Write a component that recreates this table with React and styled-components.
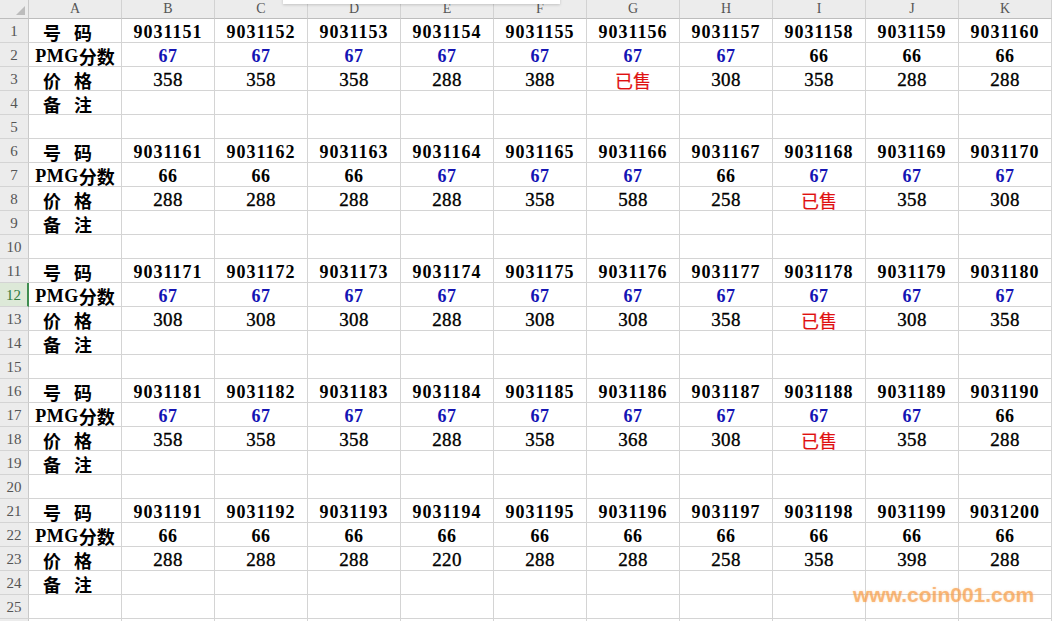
import React from 'react';
import styled, { createGlobalStyle } from 'styled-components';

const Global = createGlobalStyle`
  html, body { margin: 0; padding: 0; background: #fff; overflow: hidden; }
`;

const Frame = styled.div`
  position: relative;
  width: 1052px;
  height: 621px;
  overflow: hidden;
`;

const Sheet = styled.div`
  display: grid;
  grid-template-columns: 29px repeat(11, 93px);
  grid-template-rows: 19px;
  grid-auto-rows: 24px;
  font-family: "Liberation Serif", "Noto Sans CJK SC", serif;
`;

const Corner = styled.div`
  position: relative;
  background: #ececec;
  border-right: 1px solid #c9c9c9;
  border-bottom: 1px solid #bdbdbd;
  box-sizing: border-box;
  svg { position: absolute; right: 3px; bottom: 3px; }
`;

const ColHead = styled.div`
  box-sizing: border-box;
  background: #ececec;
  border-right: 1px solid #d2d2d2;
  border-bottom: 1px solid #bdbdbd;
  display: flex;
  align-items: center;
  justify-content: center;
  color: #555;
  font-family: "Liberation Serif", serif;
  font-size: 14px;
  line-height: 1;
`;

const RowHead = styled.div`
  box-sizing: border-box;
  background: ${p => (p.$active ? '#dde9d8' : '#ececec')};
  border-right: ${p => (p.$active ? '2px solid #3f8d50' : '1px solid #c9c9c9')};
  border-bottom: 1px solid #d4d4d4;
  display: flex;
  align-items: center;
  justify-content: center;
  padding-top: 1px;
  color: ${p => (p.$active ? '#2f7a3e' : '#555')};
  font-family: "Liberation Serif", serif;
  font-size: 15px;
  line-height: 1;
`;

const tones = { black: '#000', blue: '#1414b4', red: '#e01010' };

const Cell = styled.div`
  box-sizing: border-box;
  border-right: 1px solid #d4d4d4;
  border-bottom: 1px solid #d4d4d4;
  display: flex;
  align-items: center;
  justify-content: ${p => (p.$indent ? 'flex-start' : 'center')};
  padding-left: ${p => (p.$indent ? '14px' : '0')};
  padding-top: 2px;
  color: ${p => tones[p.$tone || 'black']};
  font-family: ${p =>
    p.$cjk
      ? '"Noto Sans CJK SC", "Liberation Serif", sans-serif'
      : '"Liberation Serif", "Noto Sans CJK SC", serif'};
  font-weight: ${p => (p.$bold ? 700 : 400)};
  font-size: ${p => p.$size || 18}px;
  letter-spacing: ${p => p.$spacing || 0}px;
  -webkit-text-stroke: ${p => p.$stroke || 0}px currentColor;
  line-height: 1;
  white-space: pre;
`;

const Label = styled.span`
  display: inline-flex;
  gap: ${p => p.$gap || 0}px;
  font-family: ${p =>
    p.$latin ? '"Liberation Serif", serif' : '"Noto Sans CJK SC", sans-serif'};
  font-weight: 700;
  font-size: 18px;
  letter-spacing: ${p => (p.$latin ? 0.5 : 0)}px;
`;

const Popup = styled.div`
  position: absolute;
  left: 283px;
  top: -6px;
  width: 277px;
  height: 10px;
  background: #fff;
  box-shadow: 0 1px 3px rgba(0, 0, 0, 0.18);
`;

const Watermark = styled.div`
  position: absolute;
  left: 853px;
  top: 583px;
  font-family: "Liberation Sans", Arial, sans-serif;
  font-weight: 700;
  font-size: 21px;
  line-height: 24px;
  color: rgba(247, 150, 60, 0.62);
  text-shadow: 0 0 2px rgba(250, 190, 120, 0.5);
  white-space: nowrap;
`;

const cols = ['A', 'B', 'C', 'D', 'E', 'F', 'G', 'H', 'I', 'J', 'K'];

const blocks = [
  {
    start: 9031151,
    score: [67, 67, 67, 67, 67, 67, 67, 66, 66, 66],
    price: [358, 358, 358, 288, 388, '已售', 308, 358, 288, 288],
  },
  {
    start: 9031161,
    score: [66, 66, 66, 67, 67, 67, 66, 67, 67, 67],
    price: [288, 288, 288, 288, 358, 588, 258, '已售', 358, 308],
  },
  {
    start: 9031171,
    score: [67, 67, 67, 67, 67, 67, 67, 67, 67, 67],
    price: [308, 308, 308, 288, 308, 308, 358, '已售', 308, 358],
  },
  {
    start: 9031181,
    score: [67, 67, 67, 67, 67, 67, 67, 67, 67, 66],
    price: [358, 358, 358, 288, 358, 368, 308, '已售', 358, 288],
  },
  {
    start: 9031191,
    score: [66, 66, 66, 66, 66, 66, 66, 66, 66, 66],
    price: [288, 288, 288, 220, 288, 288, 258, 358, 398, 288],
  },
];

const Pair = ({ a, b }) => (
  <Label $gap={13}>
    <span>{a}</span>
    <span>{b}</span>
  </Label>
);

function buildRows() {
  const empty = () => Array.from({ length: 10 }, () => ({ text: '' }));
  const rows = [];
  blocks.forEach(b => {
    rows.push({
      label: <Pair a="号" b="码" />,
      indent: true,
      cells: Array.from({ length: 10 }, (_, i) => ({
        text: String(b.start + i),
        bold: true,
        size: 18,
        spacing: 1,
      })),
    });
    rows.push({
      label: (
        <Label>
          <Label $latin>PMG</Label>
          <Label>分数</Label>
        </Label>
      ),
      cells: b.score.map(s => ({
        text: String(s),
        bold: true,
        size: 18,
        spacing: 0.5,
        tone: s === 67 ? 'blue' : 'black',
      })),
    });
    rows.push({
      label: <Pair a="价" b="格" />,
      indent: true,
      cells: b.price.map(p =>
        p === '已售'
          ? { text: p, cjk: true, size: 18, tone: 'red', stroke: 0.2 }
          : { text: String(p), size: 19, spacing: 0.3, stroke: 0.35 }
      ),
    });
    rows.push({ label: <Pair a="备" b="注" />, indent: true, cells: empty() });
    rows.push({ cells: empty() });
  });
  rows.push({ cells: empty(), noNumber: true });
  return rows;
}

export default function App() {
  const rows = buildRows();
  return (
    <Frame>
      <Global />
      <Sheet>
        <Corner>
          <svg width="9" height="9" viewBox="0 0 9 9">
            <polygon points="9,0 9,9 0,9" fill="#bcbcbc" />
          </svg>
        </Corner>
        {cols.map(c => (
          <ColHead key={c}>{c}</ColHead>
        ))}
        {rows.map((r, ri) => (
          <React.Fragment key={ri}>
            <RowHead $active={ri + 1 === 12}>{r.noNumber ? '' : ri + 1}</RowHead>
            <Cell $indent={r.indent} $size={18}>
              {r.label || ''}
            </Cell>
            {r.cells.map((c, ci) => (
              <Cell
                key={ci}
                $bold={c.bold}
                $size={c.size}
                $spacing={c.spacing}
                $tone={c.tone}
                $cjk={c.cjk}
                $stroke={c.stroke}
              >
                {c.text}
              </Cell>
            ))}
          </React.Fragment>
        ))}
      </Sheet>
      <Popup />
      <Watermark>www.coin001.com</Watermark>
    </Frame>
  );
}
